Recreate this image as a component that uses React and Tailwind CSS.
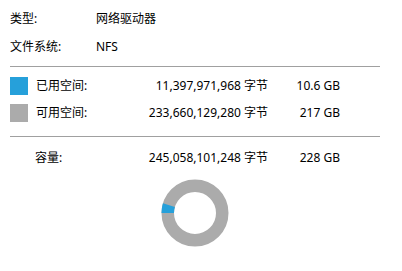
export default function App() {
  const font = { fontFamily: "'Noto Sans', 'Noto Sans CJK SC', sans-serif" }
  return (
    <div className="w-[402px] h-[271px] bg-white text-black text-[12px] overflow-hidden" style={font}>
      <div className="pt-[5px] pl-[10px]">
        {/* 类型 / 文件系统 */}
        <div className="flex items-center h-[28px]">
          <div className="w-[86px]">类型:</div>
          <div>网络驱动器</div>
        </div>
        <div className="flex items-center h-[28px]">
          <div className="w-[86px]">文件系统:</div>
          <div>NFS</div>
        </div>

        <div className="mt-[5px] w-[370px] h-px bg-[#a0a0a0]" />

        {/* 已用 / 可用 */}
        <div className="mt-[5px]">
          <div className="flex items-center h-[27px]">
            <div className="w-[130px] flex items-center">
              <div className="w-[18px] h-[18px] bg-[#26a0da]" />
              <div className="ml-[8px]">已用空间:</div>
            </div>
            <div className="w-[128px] text-right">11,397,971,968 字节</div>
            <div className="w-[72px] text-right">10.6 GB</div>
          </div>
          <div className="flex items-center h-[27px]">
            <div className="w-[130px] flex items-center">
              <div className="w-[18px] h-[18px] bg-[#ababab]" />
              <div className="ml-[8px]">可用空间:</div>
            </div>
            <div className="w-[128px] text-right">233,660,129,280 字节</div>
            <div className="w-[72px] text-right">217 GB</div>
          </div>
        </div>

        <div className="mt-[10px] w-[370px] h-px bg-[#a0a0a0]" />

        {/* 容量 */}
        <div className="mt-[7px] flex items-center h-[28px]">
          <div className="w-[130px] pl-[25px]">容量:</div>
          <div className="w-[128px] text-right">245,058,101,248 字节</div>
          <div className="w-[72px] text-right">228 GB</div>
        </div>
      </div>

      <div className="mt-[7px] flex justify-center pr-[13px]">
        <svg width="68" height="68" viewBox="0 0 68 68">
          <circle cx="34" cy="34" r="27.25" fill="none" stroke="#ababab" strokeWidth="12.5" />
          <path d="M 6.75 34 A 27.25 27.25 0 0 1 7.9 26.17" fill="none" stroke="#26a0da" strokeWidth="12.5" />
        </svg>
      </div>
    </div>
  )
}
